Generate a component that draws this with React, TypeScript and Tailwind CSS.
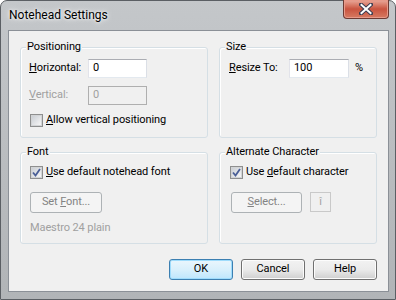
import React from "react";

function Group({ label, className, children }: { label: string; className?: string; children?: React.ReactNode }) {
  return (
    <div className={`relative rounded-[3px] border border-[#d5dfe5] shadow-[inset_1px_1px_0_#fff] ${className ?? ""}`}>
      <span className="absolute left-[5px] top-[-8px] bg-[#f0f0f0] px-[1px] leading-[14px] text-black">{label}</span>
      {children}
    </div>
  );
}

function Check({ checked }: { checked?: boolean }) {
  return (
    <span className="flex h-[13px] w-[13px] shrink-0 items-center justify-center border border-[#8e8f8f] bg-gradient-to-br from-[#dcdcdc] to-[#f8f8f8]">
      <span className="flex h-[11px] w-[11px] items-center justify-center border border-[#d2d4d6] bg-gradient-to-br from-[#cbcfd5] to-[#f6f6f6]">
        {checked && (
          <svg width="9" height="9" viewBox="0 0 9 9">
            <path d="M1 4.5 L3.5 7.5 L8 1" fill="none" stroke="#4a5f97" strokeWidth="1.8" />
          </svg>
        )}
      </span>
    </span>
  );
}

function Btn({ children, primary, disabled, className }: { children: React.ReactNode; primary?: boolean; disabled?: boolean; className?: string }) {
  const base = "flex h-[21px] items-center justify-center rounded-[3px] border";
  const look = disabled
    ? "border-[#adb2b5] bg-[#f4f4f4] text-[#838383]"
    : primary
    ? "border-[#3c7fb1] bg-gradient-to-b from-[#eaf6fd] via-[#d9f0fc] to-[#bee6fd] text-black shadow-[inset_0_0_0_1px_#9fdcfc]"
    : "border-[#707070] bg-gradient-to-b from-[#f2f2f2] via-[#ebebeb] to-[#cfcfcf] text-black shadow-[inset_0_0_0_1px_#fcfcfc]";
  return (
    <div className={`${base} ${look} ${className ?? ""}`}>
      <span>{children}</span>
    </div>
  );
}

const inputCls =
  "flex h-[19px] items-center border border-[#abadb3] border-b-[#e3e9ef] border-l-[#e2e3ea] border-r-[#dbdfe6] bg-white pl-[4px]";

export default function App() {
  return (
    <div className="h-[300px] w-[396px] overflow-hidden bg-white font-['Roboto',sans-serif] text-[11px] tracking-[-0.1px]">
      <div className="flex h-[300px] w-[396px] flex-col rounded-t-[7px] border border-[#5b5f64] bg-gradient-to-b from-[#c4c7ca] via-[#babdc0] to-[#b1b4b7] pb-[7px] pl-[7px] pr-[6px]">
        <div className="flex h-[29px] items-start justify-between">
          <div className="pl-[1px] pt-[6px] text-[12px] leading-[16px] tracking-[0px] text-black [text-shadow:0_0_6px_#fff,0_0_3px_#fff]">Notehead Settings</div>
          <div className="mt-[-1px] flex h-[19px] w-[46px] items-center justify-center rounded-b-[4px] border border-t-0 border-[#6d3a33] bg-gradient-to-b from-[#e9a99b] via-[#c9533f] to-[#d67a62] shadow-[inset_0_0_0_1px_#e79a8a]">
            <svg width="14" height="12" viewBox="0 0 14 12">
              <path d="M2 1.5 L12 10.5 M12 1.5 L2 10.5" stroke="#3c3c50" strokeWidth="4" strokeLinecap="square" />
              <path d="M2.5 2 L11.5 10 M11.5 2 L2.5 10" stroke="#ffffff" strokeWidth="2" strokeLinecap="square" />
            </svg>
          </div>
        </div>
        <div className="flex h-[262px] flex-col border border-[#8b9097] bg-[#f0f0f0] px-[11px] pb-[11px] pt-[16px] text-black">
          <div className="grid grid-cols-[188px_158px] grid-rows-[91px_92px] gap-x-[11px] gap-y-[14px]">
            <Group label="Positioning">
              <div className="flex flex-col pl-[8px] pt-[11px]">
                <div className="flex h-[19px] items-center">
                  <span className="w-[59px]"><span className="underline">H</span>orizontal:</span>
                  <div className={`${inputCls} w-[59px]`}>0</div>
                </div>
                <div className="mt-[8px] flex h-[19px] items-center text-[#a0a0a0]">
                  <span className="w-[59px]"><span className="underline">V</span>ertical:</span>
                  <div className="flex h-[19px] w-[59px] items-center border border-[#afafaf] bg-[#f0f0f0] pl-[4px] text-[#a0a0a0]">0</div>
                </div>
                <div className="mt-[7px] flex items-center pl-[1px]">
                  <Check />
                  <span className="pl-[3px]"><span className="underline">A</span>llow vertical positioning</span>
                </div>
              </div>
            </Group>
            <Group label="Size">
              <div className="mt-[11px] flex h-[19px] items-center pl-[9px]">
                <span className="w-[60px]"><span className="underline">R</span>esize To:</span>
                <div className={`${inputCls} w-[60px]`}>100</div>
                <span className="pl-[6px]">%</span>
              </div>
            </Group>
            <Group label="Font">
              <div className="flex flex-col pl-[9px] pt-[11px]">
                <div className="flex items-center">
                  <Check checked />
                  <span className="pl-[3px]"><span className="underline">U</span>se default notehead font</span>
                </div>
                <Btn disabled className="mt-[11px] w-[72px]">
                  Set <span className="underline">F</span>ont...
                </Btn>
                <div className="mt-[7px] text-[#a0a0a0]">Maestro 24 plain</div>
              </div>
            </Group>
            <Group label="Alternate Character">
              <div className="flex flex-col pl-[10px] pt-[11px]">
                <div className="flex items-center">
                  <Check checked />
                  <span className="pl-[3px]">Use <span className="underline">d</span>efault character</span>
                </div>
                <div className="mt-[11px] flex items-center">
                  <Btn disabled className="ml-[1px] w-[71px]">
                    <span className="underline">S</span>elect...
                  </Btn>
                  <div className="ml-[8px] flex h-[20px] w-[21px] items-center justify-center border border-[#c9c9c9] text-[#a0a0a0]">î</div>
                </div>
              </div>
            </Group>
          </div>
          <div className="mt-[15px] flex justify-end gap-[8px]">
            <Btn primary className="w-[64px]">OK</Btn>
            <Btn className="w-[64px]">Cancel</Btn>
            <Btn className="w-[64px]">Help</Btn>
          </div>
        </div>
      </div>
    </div>
  );
}
